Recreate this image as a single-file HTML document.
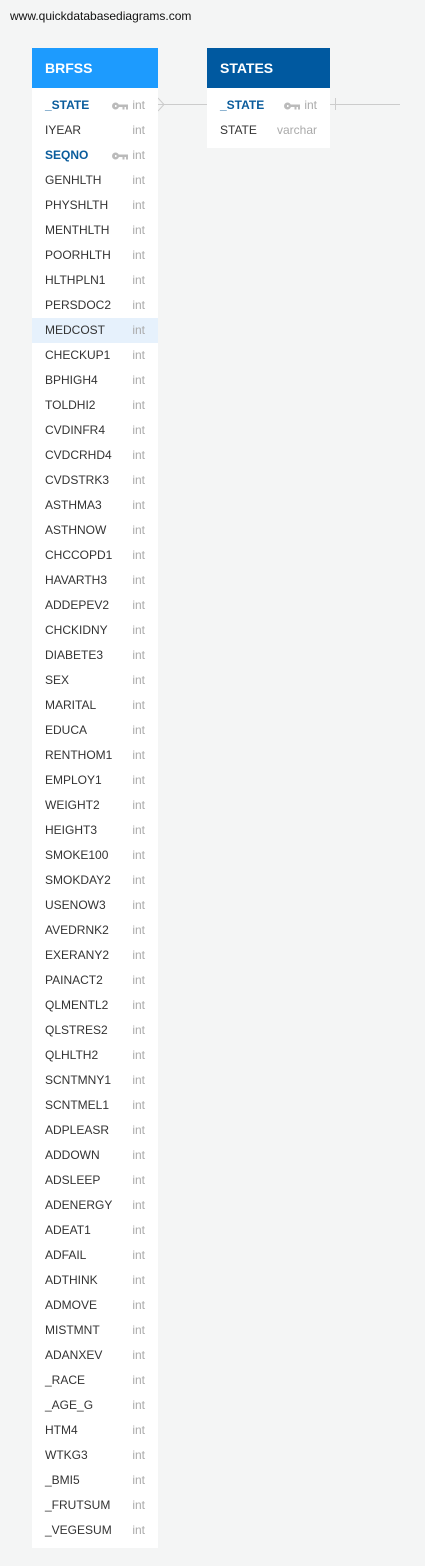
<!DOCTYPE html><html><head><style>
body{margin:0;width:425px;height:1566px;background:#f4f5f5;font-family:"Liberation Sans",sans-serif;position:relative;overflow:hidden}
.url{position:absolute;left:10px;top:9px;font-size:12px;color:#111}
.t{position:absolute;top:48px;background:#fff}
.h{height:40px;color:#fff;font-size:14px;font-weight:bold;line-height:40px;padding-left:13px}
.b{padding:5px 0 5px}
.r{height:25px;line-height:25px;font-size:12px;color:#333;position:relative;padding-left:13px}
.r .ty{position:absolute;right:13px;top:0;color:#aaa}
.k{color:#0a5c9c;font-weight:bold}
.key{position:absolute;right:30px;top:9px;width:16px;height:8px}
.hl{background:#e6f1fc}
.line{position:absolute;height:1px;background:#ccc}
</style></head><body>
<div class="url">www.quickdatabasediagrams.com</div>
<div class="line" style="left:158px;top:104px;width:49px"></div>
<div class="line" style="left:330px;top:104px;width:70px"></div>
<div class="line" style="left:335px;top:98px;width:1px;height:12px"></div>
<svg style="position:absolute;left:158px;top:97px" width="8" height="15"><path d="M0 1L6 7.5L0 14" stroke="#ccc" fill="none"/></svg>
<div class="t" style="left:32px;width:126px">
<div class="h" style="background:#1d9bfe">BRFSS</div>
<div class="b" id="rows"></div></div>
<div class="t" style="left:207px;width:123px">
<div class="h" style="background:#0059a0">STATES</div>
<div class="b">
<div class="r k">_STATE<svg class="key" viewBox="0 0 16 8"><path d="M3.5 0.5A3.5 3.5 0 1 0 3.5 7.5A3.5 3.5 0 1 0 3.5 0.5ZM3 3h1.5v2H3Z" fill="#bbb" fill-rule="evenodd"/><rect x="6" y="2.5" width="10" height="2.5" fill="#bbb"/><rect x="10.5" y="4" width="2" height="3.5" fill="#bbb"/><rect x="14" y="4" width="2" height="3.5" fill="#bbb"/></svg><span class="ty" style="font-weight:normal">int</span></div>
<div class="r">STATE<span class="ty">varchar</span></div>
</div></div>
<script>
var n="_STATE IYEAR SEQNO GENHLTH PHYSHLTH MENTHLTH POORHLTH HLTHPLN1 PERSDOC2 MEDCOST CHECKUP1 BPHIGH4 TOLDHI2 CVDINFR4 CVDCRHD4 CVDSTRK3 ASTHMA3 ASTHNOW CHCCOPD1 HAVARTH3 ADDEPEV2 CHCKIDNY DIABETE3 SEX MARITAL EDUCA RENTHOM1 EMPLOY1 WEIGHT2 HEIGHT3 SMOKE100 SMOKDAY2 USENOW3 AVEDRNK2 EXERANY2 PAINACT2 QLMENTL2 QLSTRES2 QLHLTH2 SCNTMNY1 SCNTMEL1 ADPLEASR ADDOWN ADSLEEP ADENERGY ADEAT1 ADFAIL ADTHINK ADMOVE MISTMNT ADANXEV _RACE _AGE_G HTM4 WTKG3 _BMI5 _FRUTSUM _VEGESUM".split(" ");
var key='<svg class="key" viewBox="0 0 16 8"><path d="M3.5 0.5A3.5 3.5 0 1 0 3.5 7.5A3.5 3.5 0 1 0 3.5 0.5ZM3 3h1.5v2H3Z" fill="#bbb" fill-rule="evenodd"/><rect x="6" y="2.5" width="10" height="2.5" fill="#bbb"/><rect x="10.5" y="4" width="2" height="3.5" fill="#bbb"/><rect x="14" y="4" width="2" height="3.5" fill="#bbb"/></svg>';
var h="";n.forEach(function(x){var k=x=="_STATE"||x=="SEQNO";h+='<div class="r'+(k?' k':'')+(x=="MEDCOST"?' hl':'')+'">'+x+(k?key:'')+'<span class="ty" style="font-weight:normal">int</span></div>';});
document.getElementById("rows").innerHTML=h;
</script>
</body></html>
